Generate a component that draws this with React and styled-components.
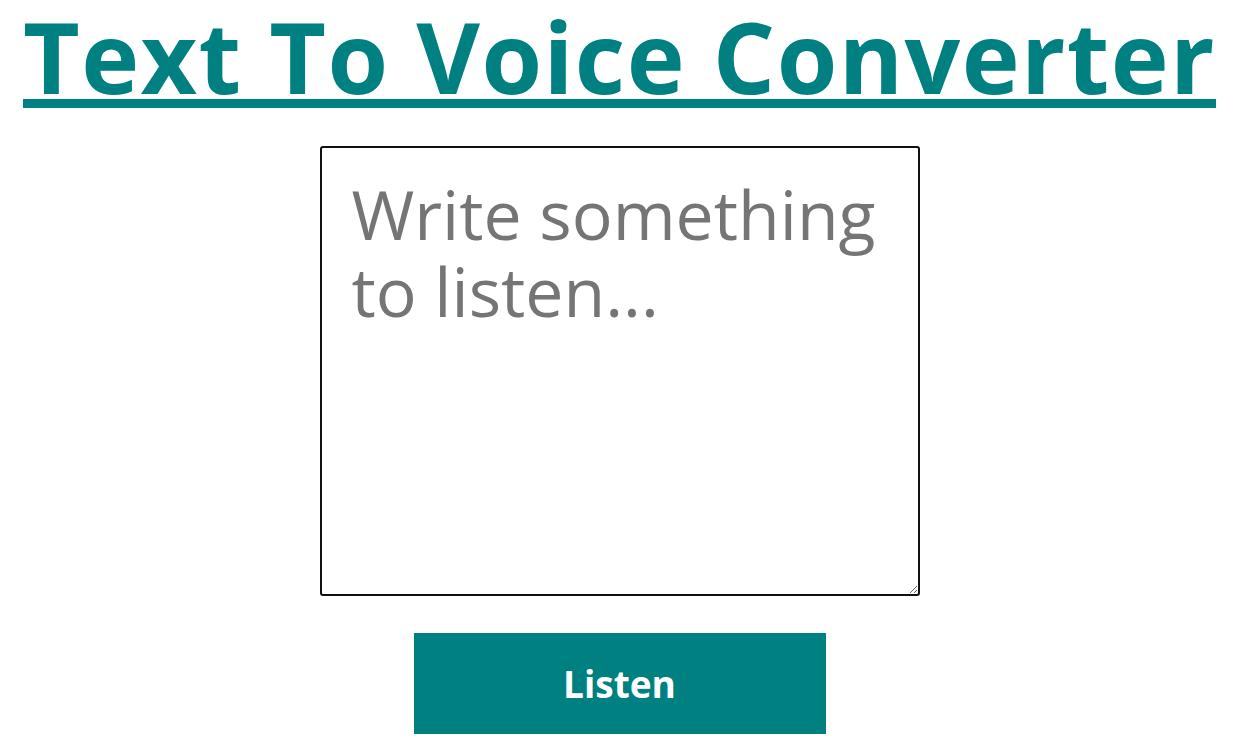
import React from "react";
import styled, { createGlobalStyle } from "styled-components";

const Global = createGlobalStyle`
  html, body { margin: 0; padding: 0; background: #ffffff; }
  body { font-family: "Open Sans", "Noto Sans", "Liberation Sans", sans-serif; }
`;

const Page = styled.main`
  display: flex;
  flex-direction: column;
  align-items: center;
  padding: 8px 7px 0 0;
`;

const Title = styled.h1`
  margin: 0;
  font-size: 98px;
  line-height: 96px;
  font-weight: 700;
  letter-spacing: 1.4px;
  color: #008080;
  text-decoration: underline;
  text-decoration-thickness: 9px;
  text-underline-offset: 5px;
  white-space: nowrap;
`;

const TextBox = styled.textarea`
  box-sizing: border-box;
  margin-top: 42px;
  width: 600px;
  height: 450px;
  border: 2px solid #111;
  border-radius: 3px;
  padding: 27px 30px;
  font-family: "Open Sans", "Noto Sans", "Liberation Sans", sans-serif;
  font-size: 68px;
  line-height: 77px;
  color: #222;
  outline: none;
  &::placeholder { color: #757575; }
`;

const Button = styled.button`
  margin-top: 37px;
  width: 412px;
  height: 101px;
  border: none;
  border-radius: 0;
  background: #008080;
  color: #fff;
  font-family: "Open Sans", "Noto Sans", "Liberation Sans", sans-serif;
  font-weight: 700;
  font-size: 37px;
  cursor: pointer;
`;

export default function App() {
  return (
    <>
      <Global />
      <Page>
        <Title>Text To Voice Converter</Title>
        <TextBox autoFocus placeholder="Write something to listen..." />
        <Button>Listen</Button>
      </Page>
    </>
  );
}
